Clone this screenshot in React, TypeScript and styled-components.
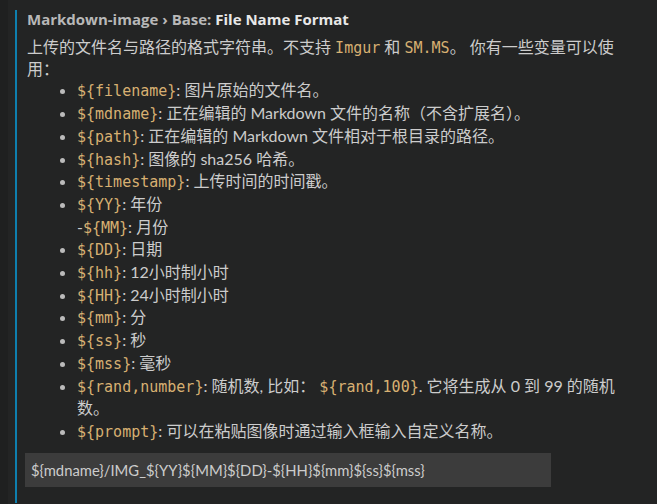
import React from 'react'
import { styled, createGlobalStyle } from 'styled-components'

const GlobalStyle = createGlobalStyle`
    html, body {
        margin: 0;
        background-color: #232424;
    }
    body {
        font-family: Lato, 'Noto Sans CJK SC', sans-serif;
        font-size: 16px;
        color: #cccccc;
    }
`

const variables: { name: string; text: string; extra?: { name: string; text: string } }[] = [
    { name: 'filename', text: '图片原始的文件名。' },
    { name: 'mdname', text: '正在编辑的 Markdown 文件的名称（不含扩展名）。' },
    { name: 'path', text: '正在编辑的 Markdown 文件相对于根目录的路径。' },
    { name: 'hash', text: '图像的 sha256 哈希。' },
    { name: 'timestamp', text: '上传时间的时间戳。' },
    { name: 'YY', text: '年份', extra: { name: 'MM', text: '月份' } },
    { name: 'DD', text: '日期' },
    { name: 'hh', text: '12小时制小时' },
    { name: 'HH', text: '24小时制小时' },
    { name: 'mm', text: '分' },
    { name: 'ss', text: '秒' },
    { name: 'mss', text: '毫秒' },
]

const App: React.FC = () => {
    return (
        <>
            <GlobalStyle />
            <Page>
                <Gutter />
                <SettingItem>
                    <Title>
                        <Category>Markdown-image › Base: </Category>
                        <Key>File Name Format</Key>
                    </Title>
                    <Description>
                        上传的文件名与路径的格式字符串。不支持 <Code>Imgur</Code> 和 <Code>SM.MS</Code>。 你有一些变量可以使用：
                    </Description>
                    <VarList>
                        {variables.map((v) => (
                            <VarItem key={v.name}>
                                <Code>{'${' + v.name + '}'}</Code>: {v.text}
                                {v.extra && (
                                    <>
                                        <br />-<Code>{'${' + v.extra.name + '}'}</Code>: {v.extra.text}
                                    </>
                                )}
                            </VarItem>
                        ))}
                        <VarItem>
                            <Code>{'${rand,number}'}</Code>: 随机数, 比如： <Code>{'${rand,100}'}</Code>. 它将生成从 0 到 99 的随机数。
                        </VarItem>
                        <VarItem>
                            <Code>{'${prompt}'}</Code>: 可以在粘贴图像时通过输入框输入自定义名称。
                        </VarItem>
                    </VarList>
                    <TextInput
                        defaultValue="${mdname}/IMG_${YY}${MM}${DD}-${HH}${mm}${ss}${mss}"
                        spellCheck={false}
                    />
                </SettingItem>
            </Page>
        </>
    )
}

export default App

const Page = styled.div`
    display: flex;
    min-height: 504px;
`

const Gutter = styled.div`
    width: 8px;
    background-color: #1f2020;
    flex-shrink: 0;
`

const SettingItem = styled.div`
    margin: 10px 0 0 7px;
    padding: 0 0 16px 10px;
    border-left: 2px solid #0e7fae;
    align-self: flex-start;
    width: 600px;
`

const Title = styled.div`
    font-family: 'Open Sans', 'Noto Sans CJK SC', sans-serif;
    font-size: 15px;
    font-weight: 700;
    line-height: 18px;
    margin-bottom: 8px;
`

const Category = styled.span`
    color: #b8b8b8;
`

const Key = styled.span`
    color: #e8e8e8;
`

const Description = styled.div`
    line-height: 21.7px;
`

const Code = styled.code`
    font-family: 'DejaVu Sans Mono', monospace;
    font-size: 15px;
    line-height: 1;
    color: #d7b072;
`

const VarList = styled.ul`
    margin: 0;
    padding: 0 0 0 50px;
    line-height: 22.7px;
    list-style: disc;
    li::marker {
        color: #bbbbbb;
    }
`

const VarItem = styled.li``

const TextInput = styled.input`
    display: block;
    box-sizing: border-box;
    width: 526px;
    height: 34px;
    margin: 10px 0 0 -2px;
    padding: 0 6px;
    border: none;
    outline: none;
    background-color: #3c3c3c;
    color: #cccccc;
    font-family: Lato, 'Noto Sans CJK SC', sans-serif;
    font-size: 14.8px;
`
